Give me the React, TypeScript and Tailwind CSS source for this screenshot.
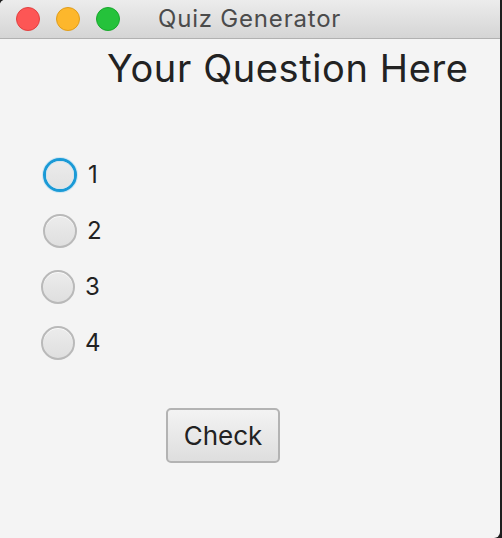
const OPTIONS = [
  { label: '1', focused: true, x: 'ml-[42px]' },
  { label: '2', focused: false, x: 'ml-[43px]' },
  { label: '3', focused: false, x: 'ml-[41px]' },
  { label: '4', focused: false, x: 'ml-[41px]' },
]

function Radio({ focused }: { focused: boolean }) {
  if (focused) {
    return (
      <span className="w-[36px] h-[36px] rounded-full bg-[#cfe6f3] flex items-center justify-center">
        <span className="w-[34px] h-[34px] rounded-full border-[3px] border-[#1a9ad6] flex items-center justify-center bg-[#e9e9e9]">
          <span className="w-[26px] h-[26px] rounded-full bg-gradient-to-b from-[#ebebeb] to-[#e2e2e2] ring-1 ring-[#d3e4ee]" />
        </span>
      </span>
    )
  }
  return (
    <span className="w-[34px] h-[34px] rounded-full border-2 border-[#b9b9b9] bg-gradient-to-b from-[#ececec] to-[#dfdfdf] shadow-[inset_0_1px_0_#fafafa]" />
  )
}

export default function App() {
  return (
    <div className="w-[502px] h-[538px] flex bg-[#1e1e1e] overflow-hidden" style={{ fontFamily: 'Inter, "Liberation Sans", sans-serif' }}>
      <div className="w-[500px] h-full flex flex-col bg-[#f4f4f4] rounded-tl-[5px] rounded-br-[6px] overflow-hidden">
        {/* title bar */}
        <div className="h-[39px] shrink-0 flex items-center bg-gradient-to-b from-[#ececec] to-[#d5d5d5] border-b border-[#b1b1b1]">
          <div className="flex gap-[16px] pl-[16px]">
            <span className="w-[24px] h-[24px] rounded-full bg-[#fd5655] border border-[#e2403f]" />
            <span className="w-[24px] h-[24px] rounded-full bg-[#fdb72c] border border-[#e09d1a]" />
            <span className="w-[24px] h-[24px] rounded-full bg-[#25c23b] border border-[#18a82c]" />
          </div>
          <span className="ml-[38px] text-[24px] text-[#4b4b4b] leading-none tracking-[0.8px]">Quiz Generator</span>
        </div>

        {/* question */}
        <div className="pl-[107px] pt-[7px] text-[38px] leading-[44px] text-[#222] tracking-[0.6px]">
          Your Question Here
        </div>

        {/* options */}
        <div className="flex flex-col gap-[22px] mt-[68px]">
          {OPTIONS.map((o) => (
            <div key={o.label} className={`flex items-center h-[34px] ${o.x}`}>
              <Radio focused={o.focused} />
              <span className="ml-[10px] text-[24px] text-[#222] leading-none">{o.label}</span>
            </div>
          ))}
        </div>

        {/* check */}
        <div className="pl-[166px] mt-[48px]">
          <button className="w-[114px] h-[55px] rounded-[5px] border-2 border-[#b3b3b3] bg-gradient-to-b from-[#f3f3f3] to-[#dedede] text-[26px] text-[#222]">
            Check
          </button>
        </div>
      </div>
    </div>
  )
}
